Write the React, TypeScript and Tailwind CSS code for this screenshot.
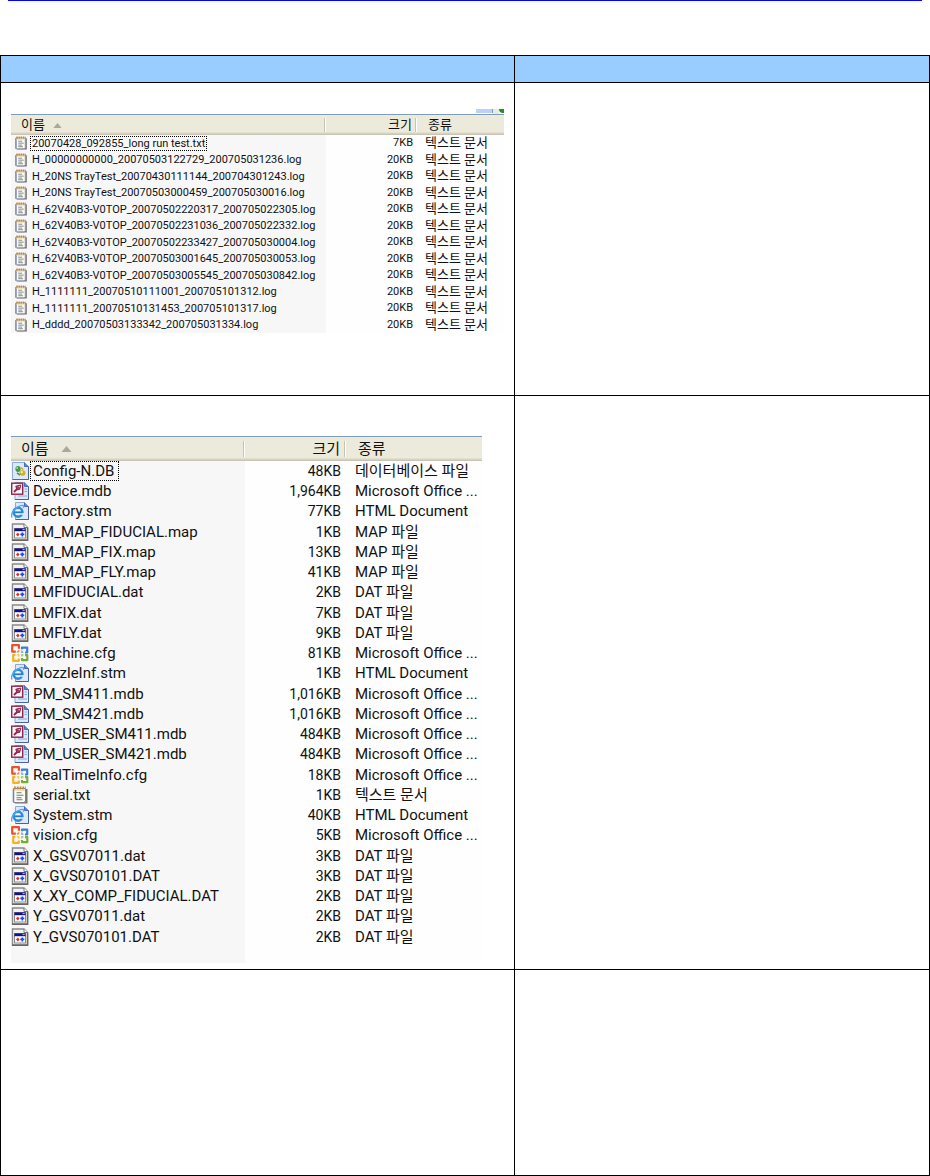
import React from 'react';
import clsx from 'clsx';

type IconKind = 'text' | 'db' | 'access' | 'html' | 'data' | 'office';

interface FileRow {
  icon: IconKind;
  name: string;
  size: string;
  type: string;
}

const logFiles: FileRow[] = [
  { icon: 'text', name: '20070428_092855_long run test.txt', size: '7KB', type: '텍스트 문서' },
  { icon: 'text', name: 'H_00000000000_20070503122729_200705031236.log', size: '20KB', type: '텍스트 문서' },
  { icon: 'text', name: 'H_20NS TrayTest_20070430111144_200704301243.log', size: '20KB', type: '텍스트 문서' },
  { icon: 'text', name: 'H_20NS TrayTest_20070503000459_200705030016.log', size: '20KB', type: '텍스트 문서' },
  { icon: 'text', name: 'H_62V40B3-V0TOP_20070502220317_200705022305.log', size: '20KB', type: '텍스트 문서' },
  { icon: 'text', name: 'H_62V40B3-V0TOP_20070502231036_200705022332.log', size: '20KB', type: '텍스트 문서' },
  { icon: 'text', name: 'H_62V40B3-V0TOP_20070502233427_200705030004.log', size: '20KB', type: '텍스트 문서' },
  { icon: 'text', name: 'H_62V40B3-V0TOP_20070503001645_200705030053.log', size: '20KB', type: '텍스트 문서' },
  { icon: 'text', name: 'H_62V40B3-V0TOP_20070503005545_200705030842.log', size: '20KB', type: '텍스트 문서' },
  { icon: 'text', name: 'H_1111111_20070510111001_200705101312.log', size: '20KB', type: '텍스트 문서' },
  { icon: 'text', name: 'H_1111111_20070510131453_200705101317.log', size: '20KB', type: '텍스트 문서' },
  { icon: 'text', name: 'H_dddd_20070503133342_200705031334.log', size: '20KB', type: '텍스트 문서' },
];

const configFiles: FileRow[] = [
  { icon: 'db', name: 'Config-N.DB', size: '48KB', type: '데이터베이스 파일' },
  { icon: 'access', name: 'Device.mdb', size: '1,964KB', type: 'Microsoft Office ...' },
  { icon: 'html', name: 'Factory.stm', size: '77KB', type: 'HTML Document' },
  { icon: 'data', name: 'LM_MAP_FIDUCIAL.map', size: '1KB', type: 'MAP 파일' },
  { icon: 'data', name: 'LM_MAP_FIX.map', size: '13KB', type: 'MAP 파일' },
  { icon: 'data', name: 'LM_MAP_FLY.map', size: '41KB', type: 'MAP 파일' },
  { icon: 'data', name: 'LMFIDUCIAL.dat', size: '2KB', type: 'DAT 파일' },
  { icon: 'data', name: 'LMFIX.dat', size: '7KB', type: 'DAT 파일' },
  { icon: 'data', name: 'LMFLY.dat', size: '9KB', type: 'DAT 파일' },
  { icon: 'office', name: 'machine.cfg', size: '81KB', type: 'Microsoft Office ...' },
  { icon: 'html', name: 'NozzleInf.stm', size: '1KB', type: 'HTML Document' },
  { icon: 'access', name: 'PM_SM411.mdb', size: '1,016KB', type: 'Microsoft Office ...' },
  { icon: 'access', name: 'PM_SM421.mdb', size: '1,016KB', type: 'Microsoft Office ...' },
  { icon: 'access', name: 'PM_USER_SM411.mdb', size: '484KB', type: 'Microsoft Office ...' },
  { icon: 'access', name: 'PM_USER_SM421.mdb', size: '484KB', type: 'Microsoft Office ...' },
  { icon: 'office', name: 'RealTimeInfo.cfg', size: '18KB', type: 'Microsoft Office ...' },
  { icon: 'text', name: 'serial.txt', size: '1KB', type: '텍스트 문서' },
  { icon: 'html', name: 'System.stm', size: '40KB', type: 'HTML Document' },
  { icon: 'office', name: 'vision.cfg', size: '5KB', type: 'Microsoft Office ...' },
  { icon: 'data', name: 'X_GSV07011.dat', size: '3KB', type: 'DAT 파일' },
  { icon: 'data', name: 'X_GVS070101.DAT', size: '3KB', type: 'DAT 파일' },
  { icon: 'data', name: 'X_XY_COMP_FIDUCIAL.DAT', size: '2KB', type: 'DAT 파일' },
  { icon: 'data', name: 'Y_GSV07011.dat', size: '2KB', type: 'DAT 파일' },
  { icon: 'data', name: 'Y_GVS070101.DAT', size: '2KB', type: 'DAT 파일' },
];

// Blue sheet with a folded corner, shared by the document icons
const Sheet: React.FC<{ x: number }> = ({ x }) => (
  <g>
    <path d={`M${x} 0.5H13.5l4 4V17.5H${x}Z`} fill="#dce9fb" stroke="#8fa9dc" />
    <path d="M13.5 0.5V4.5h4" fill="#5f86cf" stroke="#4a6bb5" />
    <path d={`M17.5 4.5V17.5H${x}`} fill="none" stroke="#4a62a8" />
  </g>
);

const FileIcon: React.FC<{ kind: IconKind; className: string }> = ({ kind, className }) => (
  <svg viewBox="0 0 18 18" className={className}>
    {kind === 'text' && (
      <g>
        <path d="M15.5 3v13.5H4" fill="none" stroke="#777" strokeWidth="2" />
        <path d="M2.5 2.5h12V15l-1.5 1.5H2.5Z" fill="#fbfcf4" stroke="#7f8290" />
        <path d="M2.5 3v13" stroke="#7180bd" strokeWidth="1.5" />
        <path d="M3 2h12" stroke="#c18a31" strokeWidth="3" strokeDasharray="1.8 1" />
        <path d="M3 4.2h11" stroke="#f0d291" />
        <path d="M5.5 6.7h5M5.5 9.2h7M5.5 11.7h5M5.5 13.8h6" stroke="#6e7b7b" strokeWidth="1.1" />
      </g>
    )}
    {kind === 'db' && (
      <g>
        <Sheet x={1.5} />
        <ellipse cx="7" cy="7" rx="2.6" ry="2.9" fill="#3f9b48" />
        <circle cx="6.2" cy="6" r="1" fill="#a4dda0" />
        <ellipse cx="11.5" cy="11" rx="3" ry="2.8" fill="#d9ad22" />
        <circle cx="10.8" cy="10.2" r="1.1" fill="#fff0a0" />
        <path d="M9.8 5.5l2.4 2.2" stroke="#d9ad22" strokeWidth="1.6" />
        <path d="M6 10.8l3 2.4" stroke="#3f9b48" strokeWidth="1.6" />
      </g>
    )}
    {kind === 'access' && (
      <g>
        <Sheet x={4} />
        <path d="M13.5 7h2.5M13.5 9.5h2.5M7 14h9" stroke="#86a8e2" />
        <rect x="0.7" y="1.2" width="11" height="11" fill="#fff3f7" stroke="#8b294c" strokeWidth="1.4" />
        <path d="M3 10l3.5-3.5" stroke="#8b294c" strokeWidth="1.8" />
        <path d="M4.8 4.2l5-1.2-1.1 4.4-2.8.4Z" fill="#a63d62" stroke="#8b294c" />
        <circle cx="8.2" cy="4.6" r="0.7" fill="#fff" />
      </g>
    )}
    {kind === 'html' && (
      <g>
        <Sheet x={4.5} />
        <circle cx="7" cy="10.2" r="4.4" fill="#e9f5ff" stroke="#2f8edb" strokeWidth="2.6" />
        <path d="M3.5 10.3h8" stroke="#2879c9" strokeWidth="1.8" />
        <path d="M9.5 12h3.6" stroke="#dce9fb" strokeWidth="1.6" />
        <path d="M1 15.5C-1 12 4 5.5 9 3.8c3-1 4.3-.3 3.3 2" fill="none" stroke="#52a8e8" strokeWidth="1.4" />
      </g>
    )}
    {kind === 'data' && (
      <g>
        <path d="M1.5 1H13l3.5 3.5V17H1.5Z" fill="#f3f3ee" stroke="#8b8b8b" strokeWidth="1.4" />
        <path d="M13 1V4.5h3.5" fill="#fff" stroke="#777" />
        <path d="M16.6 4.5v12.8H1" fill="none" stroke="#666" strokeWidth="1.4" />
        <rect x="3.5" y="5.5" width="11" height="9.5" fill="#fff" stroke="#888" />
        <path d="M3.5 6.8h11" stroke="#101090" strokeWidth="2.8" />
        <path d="M11.5 6.6h2.2" stroke="#b9c0dd" />
        <path d="M6.8 9.4l1.8 2-1.8 2-1.8-2Z" fill="#d9332b" />
        <path d="M11.3 9.4v4M9.3 11.4h4" stroke="#2149d9" strokeWidth="1.7" />
      </g>
    )}
    {kind === 'office' && (
      <g fill="none" strokeWidth="2.2" strokeLinejoin="round">
        <path d="M7.9 4.8V1.2H1.2V7.6H4.8" stroke="#e6532c" />
        <path d="M7.6 6.2v1.6H5.8" stroke="#f08a4a" strokeWidth="1.6" />
        <path d="M11 5.2V3.6h5.2v4.9H14" stroke="#3c7fd0" />
        <path d="M10.8 6.6v1.7h1.6" stroke="#7fb0e6" strokeWidth="1.6" />
        <path d="M4.4 11H2.2v5.8h5.6V14.4" stroke="#f3b322" />
        <path d="M5.8 10.8h1.9v2" stroke="#f7cd5c" strokeWidth="1.6" />
        <path d="M11 14v2.2h5.3V11.2H14" stroke="#77ac3c" />
        <path d="M10.8 12.6v-1.7h1.6" stroke="#a5cc74" strokeWidth="1.6" />
      </g>
    )}
  </svg>
);

interface FileListProps {
  files: FileRow[];
  large?: boolean;
}

const FileList: React.FC<FileListProps> = ({ files, large = false }) => {
  const headCell = clsx(
    'border-t border-t-[#7f9db9] bg-[#ebeadb] p-0 pr-px font-normal',
    'shadow-[inset_0_-1px_0_#c9c5b5,inset_0_-2px_0_#d7d3c4,inset_0_-3px_0_#e3dfd0]',
    large ? 'h-[25px]' : 'h-[21px]'
  );
  const headButton = clsx(
    'flex w-full items-center border-r border-[#c6c4b3] shadow-[1px_0_0_#fff]',
    large ? 'h-4 text-[15px] leading-4' : 'h-[14px] text-[13px] leading-[14px]'
  );

  return (
    <table
      className={clsx(
        'table-fixed border-separate border-spacing-0 bg-[#fefefe] text-left text-[#111]',
        large ? 'w-[471px]' : 'w-[493px]'
      )}
    >
      <colgroup>
        <col className={large ? 'w-[234px]' : 'w-[315px]'} />
        <col className={large ? 'w-[101px]' : 'w-[91px]'} />
        <col />
      </colgroup>
      <thead>
        <tr>
          <th className={headCell}>
            <button type="button" className={clsx(headButton, 'pl-[10px]', large ? 'gap-3' : 'gap-2')}>
              이름
              <svg viewBox="0 0 10 6" className={large ? 'h-[6px] w-[11px]' : 'h-[5px] w-[9px]'}>
                <path d="M5 0l5 6H0Z" fill="#aca899" />
              </svg>
            </button>
          </th>
          <th className={headCell}>
            <button type="button" className={clsx(headButton, 'justify-end', large ? 'pr-1' : 'pr-[3px]')}>크기</button>
          </th>
          <th className={headCell}>
            <button type="button" className={clsx(headButton, 'border-r-0 shadow-none', large ? 'pl-3' : 'pl-[11px]')}>종류</button>
          </th>
        </tr>
      </thead>
      <tbody>
        {files.map((file, index) => (
          <tr key={file.name} className={large ? 'h-5 nth-[4n]:h-[21px]' : 'h-4 even:h-[17px]'}>
            <td className="bg-[#f7f7f7] p-0">
              <div className={clsx('flex items-center', large ? 'gap-px' : 'gap-[2px] pl-[3px]')}>
                <FileIcon kind={file.icon} className={large ? 'size-[18px] shrink-0' : 'size-[14px] shrink-0'} />
                <span
                  className={clsx(
                    'whitespace-nowrap border border-dotted',
                    index === 0 ? 'border-black' : 'border-transparent',
                    large ? 'pl-0.5 pr-1 font-[Roboto] text-[15px] leading-[18px]' : 'px-px font-[Roboto] text-[11px] leading-[13px]'
                  )}
                >
                  {file.name}
                </span>
              </div>
            </td>
            <td
              className={clsx(
                'p-0 text-right font-[Roboto]',
                large ? 'pr-[5px] text-[14px] leading-5' : 'pr-1 text-[11px] leading-4'
              )}
            >
              {file.size}
            </td>
            <td
              className={clsx(
                'whitespace-nowrap p-0 font-[Roboto,"Noto_Sans_CJK_KR",sans-serif]',
                large ? 'pl-[9px] text-[15px] leading-5' : 'pl-2 text-[13px] leading-4'
              )}
            >
              {file.type}
            </td>
          </tr>
        ))}
        {large && (
          <tr className="h-4">
            <td className="bg-[#f7f7f7] p-0" />
            <td className="p-0" />
            <td className="p-0" />
          </tr>
        )}
      </tbody>
    </table>
  );
};

const App: React.FC = () => {
  return (
    <div className='bg-white font-["Liberation_Sans","Noto_Sans_CJK_KR",sans-serif]'>
      <div className="mx-2 h-px bg-[#0000ff]" />
      <table className="mt-[54px] w-full table-fixed border-separate border-spacing-0 border-l border-t border-black">
        <thead>
          <tr className="h-[27px]">
            <th className="w-[55.3%] border-b border-r border-black bg-[#99ccff] p-0" />
            <th className="border-b border-r border-black bg-[#99ccff] p-0" />
          </tr>
        </thead>
        <tbody>
          <tr className="h-[313px] align-top">
            <td className="border-b border-r border-black p-0 pl-[10px] pt-[26px]">
              {/* lower edge of the toolbar above the list */}
              <div className="flex h-[5px] w-[493px] justify-end">
                <div className="h-1 w-[17px] border-r border-[#7f9db9] bg-[#bcd0fb]" />
                <div className="w-[6px] bg-[#ebeadb]" />
                <div className="h-1 w-[5px] rounded-bl-sm bg-[#2d8a2d]" />
              </div>
              <FileList files={logFiles} />
            </td>
            <td className="border-b border-r border-black p-0" />
          </tr>
          <tr className="h-[574px] align-top">
            <td className="border-b border-r border-black p-0 pl-[10px] pt-10">
              <FileList files={configFiles} large />
            </td>
            <td className="border-b border-r border-black p-0" />
          </tr>
          <tr className="h-[206px]">
            <td className="border-b border-r border-black p-0" />
            <td className="border-b border-r border-black p-0" />
          </tr>
        </tbody>
      </table>
    </div>
  );
};

export default App;
